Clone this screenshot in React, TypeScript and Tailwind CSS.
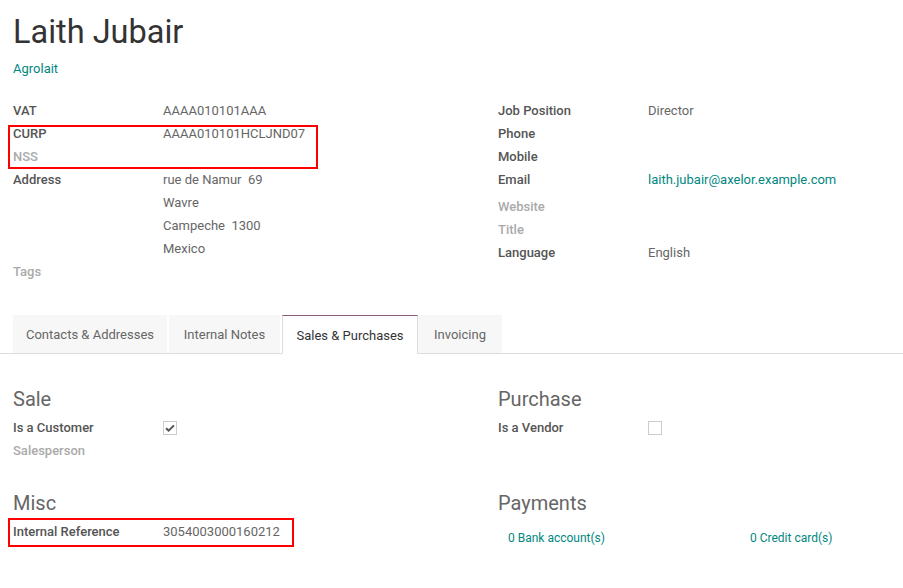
import React from 'react';

const font = { fontFamily: 'Roboto, "Liberation Sans", sans-serif' };

const Field: React.FC<{ label: string; muted?: boolean; children?: React.ReactNode; className?: string }> = ({
  label,
  muted,
  children,
  className = '',
}) => (
  <div className={`grid grid-cols-[150px_1fr] h-[23px] items-center ${className}`}>
    <span className={`font-medium ${muted ? 'text-[#aaaaaa]' : 'text-[#555555]'}`}>{label}</span>
    <span className="text-[#666666]">{children}</span>
  </div>
);

const CheckBox: React.FC<{ checked?: boolean }> = ({ checked }) => (
  <span className="w-[14px] h-[14px] border border-[#cccccc] bg-white flex items-center justify-center">
    {checked && (
      <svg width="10" height="8" viewBox="0 0 10 8">
        <path d="M1 4.2 L3.6 6.6 L9 1.4" fill="none" stroke="#555555" strokeWidth="2" />
      </svg>
    )}
  </span>
);

const tabs = [
  { name: 'Contacts & Addresses', w: 'w-[154px] mr-[2px]' },
  { name: 'Internal Notes', w: 'w-[111px] mr-[2px]' },
  { name: 'Sales & Purchases', w: 'w-[136px]', active: true },
  { name: 'Invoicing', w: 'w-[84px]' },
];

export default function App() {
  return (
    <div className="relative w-[903px] h-[588px] bg-white text-[13px] overflow-hidden" style={font}>
      {/* Header */}
      <div className="pl-[13px] pt-[12px]">
        <h1 className="text-[32.5px] leading-[41px] text-[#333333]">Laith Jubair</h1>
        <div className="h-[23px] mt-[4px] flex items-center text-[#01877f]">Agrolait</div>
      </div>

      {/* Main fields */}
      <div className="grid grid-cols-[485px_1fr] pl-[13px] mt-[19px]">
        <div>
          <Field label="VAT">AAAA010101AAA</Field>
          <Field label="CURP">AAAA010101HCLJND07</Field>
          <Field label="NSS" muted />
          <Field label="Address">rue de Namur&nbsp; 69</Field>
          <Field label="">Wavre</Field>
          <Field label="">Campeche&nbsp; 1300</Field>
          <Field label="">Mexico</Field>
          <Field label="Tags" muted />
        </div>
        <div>
          <Field label="Job Position">Director</Field>
          <Field label="Phone" />
          <Field label="Mobile" />
          <Field label="Email" className="mb-[4px]">
            <span className="text-[#01877f]">laith.jubair@axelor.example.com</span>
          </Field>
          <Field label="Website" muted />
          <Field label="Title" muted />
          <Field label="Language">English</Field>
        </div>
      </div>

      {/* Tabs */}
      <div className="flex items-end pl-[13px] mt-[32px] border-b border-[#dddddd] h-[39px]">
        {tabs.map((t) =>
          t.active ? (
            <div
              key={t.name}
              className={`${t.w} h-[39px] -mb-px pt-[2px] flex items-center justify-center bg-white border border-[#dddddd] border-t-[#875a7b] border-b-white text-[#333333]`}
            >
              {t.name}
            </div>
          ) : (
            <div
              key={t.name}
              className={`${t.w} h-[38px] pt-[2px] flex items-center justify-center bg-[#f7f7f7] text-[#666666]`}
            >
              {t.name}
            </div>
          )
        )}
      </div>

      {/* Tab content */}
      <div className="grid grid-cols-[485px_1fr] pl-[13px] pt-[33px]">
        <div>
          <h2 className="text-[20px] leading-[24px] text-[#666666] mb-[5px]">Sale</h2>
          <div className="grid grid-cols-[150px_1fr] h-[23px] items-center">
            <span className="font-medium text-[#555555]">Is a Customer</span>
            <CheckBox checked />
          </div>
          <Field label="Salesperson" muted />
        </div>
        <div>
          <h2 className="text-[20px] leading-[24px] text-[#666666] mb-[5px]">Purchase</h2>
          <div className="grid grid-cols-[150px_1fr] h-[23px] items-center">
            <span className="font-medium text-[#555555]">Is a Vendor</span>
            <CheckBox />
          </div>
        </div>

        <div className="mt-[29px]">
          <h2 className="text-[20px] leading-[24px] text-[#666666] mb-[5px]">Misc</h2>
          <Field label="Internal Reference">3054003000160212</Field>
        </div>
        <div className="mt-[29px]">
          <h2 className="text-[20px] leading-[24px] text-[#666666]">Payments</h2>
          <div className="grid grid-cols-[252px_1fr] h-[23px] items-center mt-[11px] text-[12px] text-[#01877f]">
            <span className="pl-[10px]">0 Bank account(s)</span>
            <span>0 Credit card(s)</span>
          </div>
        </div>
      </div>

      {/* Annotation boxes */}
      <div className="absolute left-[8px] top-[125px] w-[310px] h-[44px] border-2 border-[#ff0000] pointer-events-none" />
      <div className="absolute left-[8px] top-[518px] w-[286px] h-[29px] border-2 border-[#ff0000] pointer-events-none" />
    </div>
  );
}
